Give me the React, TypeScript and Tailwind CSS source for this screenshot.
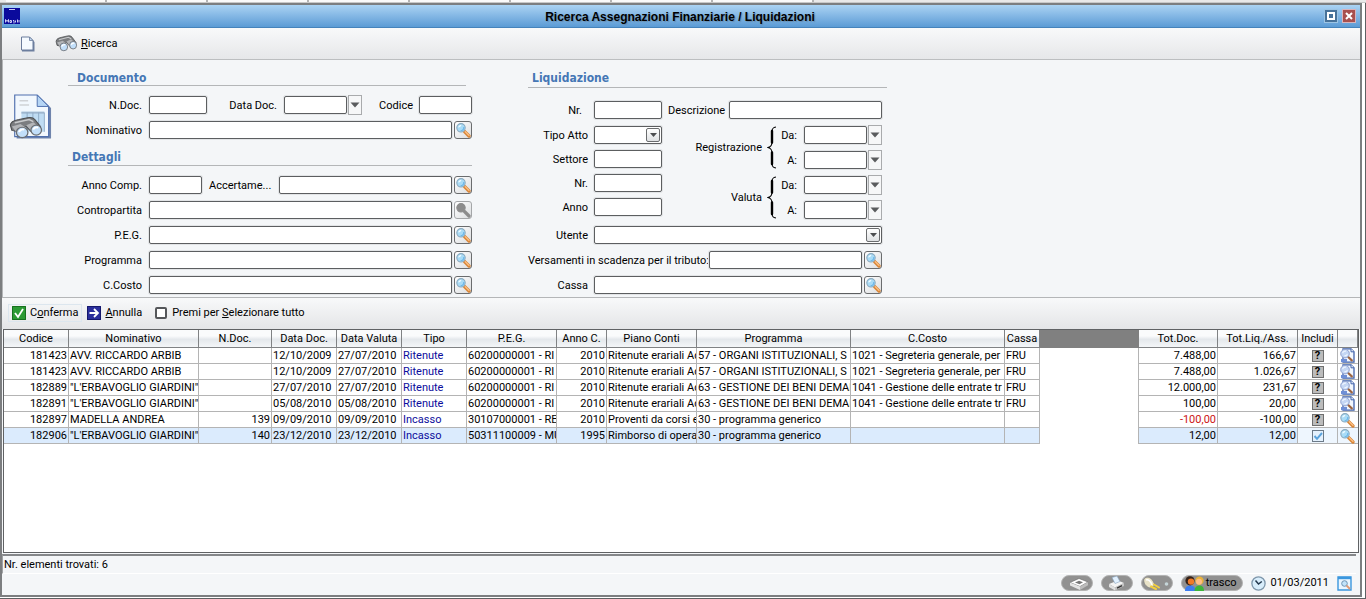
import React from "react";

const INPUT =
  "h-[18px] min-w-0 rounded-[2px] border border-[#5c5e60] bg-white px-1 shadow-[0_0_0_1px_#e2e4e6] outline-none";

function Lens({ muted = false }: { muted?: boolean }) {
  return (
    <svg width="16" height="16" viewBox="0 0 16 16" aria-hidden="true">
      <path d="M9.5 9.5 L14 14" stroke={muted ? "#8c8c8c" : "#d98638"} strokeWidth="3.2" strokeLinecap="round" />
      {!muted && <path d="M10.2 9.6 L14 13.4" stroke="#ffc58a" strokeWidth="1.3" strokeLinecap="round" />}
      <circle cx="6" cy="5.8" r="4.2" fill={muted ? "#8c8c8c" : "#a9dcf7"} stroke={muted ? "#8c8c8c" : "#8aaabf"} strokeWidth="1.1" />
      {!muted && <path d="M3.2 5.6 C3.4 3.6 5 2.7 6.6 2.8 C6 4.4 5 5.4 3.2 5.6 Z" fill="#effaff" />}
      {!muted && <path d="M8.8 5 C9 7 7.8 8.6 5.6 8.8" stroke="#6cb8ea" strokeWidth="1.2" fill="none" />}
    </svg>
  );
}

function SearchButton({ label, muted = false }: { label: string; muted?: boolean }) {
  return (
    <button
      type="button"
      aria-label={label}
      disabled={muted}
      className={`ml-0.5 flex h-[18px] w-[18px] shrink-0 items-center justify-center rounded-[3px] border bg-gradient-to-br from-white to-[#dcdee0] ${muted ? "border-[#a4a6a8]" : "border-[#6a6c6e]"}`}
    >
      <Lens muted={muted} />
    </button>
  );
}

function DateField({ id }: { id: string }) {
  return (
    <div className="flex h-[18px] items-center">
      <input id={id} className={`${INPUT} w-[63px]`} />
      <button
        type="button"
        aria-label="Apri calendario"
        className="ml-px flex h-5 w-3.5 shrink-0 items-center justify-center border border-[#a9abad] bg-[#f6f7f8]"
      >
        <svg width="10" height="6" viewBox="0 0 10 6" aria-hidden="true">
          <path d="M0.5 0.5 H9.5 L5 5.5 Z" fill="#5a5c5e" />
        </svg>
      </button>
    </div>
  );
}

function Combo({ id, width }: { id: string; width: string }) {
  return (
    <div className={`relative ${width}`}>
      <select id={id} className={`${INPUT} block w-full appearance-none`} />
      <span className="pointer-events-none absolute top-0.5 right-0.5 flex h-3.5 w-3.5 items-center justify-center rounded-[2px] border border-[#6a6c6e] bg-gradient-to-b from-white to-[#dfe1e3]">
        <svg width="7" height="4" viewBox="0 0 7 4" aria-hidden="true">
          <path d="M0 0 H7 L3.5 4 Z" fill="#4c4e50" />
        </svg>
      </span>
    </div>
  );
}

function Brace() {
  return (
    <svg width="10" height="43" viewBox="0 0 10 43" aria-hidden="true">
      <path
        d="M9 1 C5.4 1.4 5 3 5 6 V16 C5 19.4 4.2 20.6 1 21.5 C4.2 22.4 5 23.6 5 27 V37 C5 40 5.4 41.6 9 42"
        fill="none"
        stroke="#000"
        strokeWidth="1.2"
      />
      <path d="M5 5 V16.5 M5 26.5 V38" stroke="#000" strokeWidth="2.4" strokeLinecap="round" />
    </svg>
  );
}

function BinocularShapes() {
  return (
    <>
      <path d="M1 7 C1 4 4 3 7 2.4 L13 1 C15 .6 17 1 18 2.4 L22 8 L21.5 12 L16.5 13 L12 8 L9 9 L6.5 12 L2 11 Z" fill="#7b7d80" stroke="#4c4e50" strokeWidth=".8" />
      <path d="M4 5 L14 2.4 L17 4" stroke="#c9cbcd" strokeWidth="1.2" fill="none" />
      <path d="M2 8 L7 15 L12 9 L8 6 Z" fill="#b3b5b8" />
      <path d="M12 7 L17 13.5 L21 8.5 L17 4.6 Z" fill="#b3b5b8" />
      <ellipse cx="9.2" cy="12.6" rx="4" ry="4.1" fill="#c2dffa" stroke="#6b6e72" strokeWidth=".9" />
      <ellipse cx="19" cy="10.8" rx="3.7" ry="4" fill="#c2dffa" stroke="#6b6e72" strokeWidth=".9" />
      <path d="M7 12.4 C7.4 10.6 9 10 10.6 10.4 M17 10.4 C17.4 9 19 8.2 20.4 8.8" stroke="#fff" strokeWidth="1.4" fill="none" />
    </>
  );
}

function Binoculars() {
  return (
    <svg width="23" height="17" viewBox="0 0 24 18" aria-hidden="true">
      <BinocularShapes />
    </svg>
  );
}

function DocumentArt() {
  return (
    <svg width="43" height="47" viewBox="0 0 45 48" aria-hidden="true">
      <path d="M8 3 H31 L44 15 V47 H8 Z" fill="#6f84ac" />
      <path d="M6 1.5 H29.5 L41.5 13.5 V45 H6 Z" fill="#f2f8fe" stroke="#4f6fae" strokeWidth="1.2" />
      <path d="M29.5 1.5 V13.5 H41.5 Z" fill="#b5d5f5" stroke="#4f6fae" strokeWidth="1" />
      <path d="M11 7.5 H20 M11 12 H21" stroke="#cfd2d6" strokeWidth="1.6" />
      <path d="M13 19 H37 V40 H13 Z" fill="#bfdcf3" />
      <path d="M13 20 H37" stroke="#9fb6ce" strokeWidth="2" />
      <path d="M19 20 V40 M25 20 V40 M31 20 V40 M37 20 V40" stroke="#8fabc6" />
      <g transform="translate(0 24) scale(1.5 1.32)">
        <BinocularShapes />
      </g>
    </svg>
  );
}

function DocLens() {
  return (
    <svg width="16" height="15" viewBox="0 0 16 15" aria-hidden="true">
      <path d="M4 .8 H12 L15 3.8 V14.2 H4 Z" fill="#f2f7fe" stroke="#3f62ab" strokeWidth="1.3" />
      <path d="M12 .8 V3.8 H15" fill="#fff" stroke="#3f62ab" strokeWidth="1" />
      <path d="M2 11 H8 V14.2 H2 Z" fill="#6f8fd6" />
      <path d="M9.2 9 L12.8 12.4" stroke="#9c6440" strokeWidth="2.2" strokeLinecap="round" />
      <circle cx="6" cy="5.6" r="4.3" fill="#c4d6f4" stroke="#93a3cf" />
      <path d="M3.6 5.2 C4 3.6 5.4 2.8 7 3.2 M5.4 7.6 C6.6 8 8 7.4 8.4 6.2" stroke="#eef5ff" strokeWidth="1.3" fill="none" />
    </svg>
  );
}

function FormRow({ id, label, children }: { id: string; label: string; children: React.ReactNode }) {
  return (
    <div className="flex h-[18px] items-center">
      <label htmlFor={id} className="w-[81px] shrink-0 pr-[7px] text-right">
        {label}
      </label>
      {children}
    </div>
  );
}

function LookupRow({ id, label, muted }: { id: string; label: string; muted?: boolean }) {
  return (
    <FormRow id={id} label={label}>
      <input id={id} className={`${INPUT} flex-1`} />
      <SearchButton label={`Cerca ${label}`} muted={muted} />
    </FormRow>
  );
}

function NarrowRow({ id, label, inset = "pr-1.5", children }: { id: string; label: string; inset?: string; children?: React.ReactNode }) {
  return (
    <div className="flex h-[18px] items-center">
      <label htmlFor={id} className={`w-[66px] shrink-0 text-right ${inset}`}>
        {label}
      </label>
      {children ?? <input id={id} className={`${INPUT} w-[68px]`} />}
    </div>
  );
}

function DateRange({ id, label }: { id: string; label: string }) {
  return (
    <div role="group" aria-labelledby={`${id}-titolo`} className="flex h-[43px] items-center justify-end">
      <span id={`${id}-titolo`} className="pr-[5px]">{label}</span>
      <Brace />
      <div className="flex w-[105px] flex-col gap-[7px]">
        <div className="flex items-center justify-end gap-[7px]">
          <label htmlFor={`${id}-da`}>Da:</label>
          <DateField id={`${id}-da`} />
        </div>
        <div className="flex items-center justify-end gap-[7px]">
          <label htmlFor={`${id}-a`}>A:</label>
          <DateField id={`${id}-a`} />
        </div>
      </div>
    </div>
  );
}

const HEADING =
  "border-b border-[#b4b6b8] font-['DejaVu_Sans_Condensed','DejaVu_Sans',sans-serif] text-xs leading-4 font-bold text-[#4577b5]";

type Row = {
  codice: string;
  nome: string;
  ndoc: string;
  dataDoc: string;
  dataValuta: string;
  tipo: string;
  peg: string;
  anno: string;
  piano: string;
  programma: string;
  costo: string;
  cassa: string;
  totDoc: string;
  totLiq: string;
  checked?: boolean;
  simple?: boolean;
};

const r = (
  codice: string, nome: string, ndoc: string, dataDoc: string, dataValuta: string, tipo: string, peg: string, anno: string,
  piano: string, programma: string, costo: string, cassa: string, totDoc: string, totLiq: string, simple = false, checked = false,
): Row => ({ codice, nome, ndoc, dataDoc, dataValuta, tipo, peg, anno, piano, programma, costo, cassa, totDoc, totLiq, simple, checked });

const ROWS: Row[] = [
  r("181423", "AVV. RICCARDO ARBIB", "", "12/10/2009", "27/07/2010", "Ritenute", "60200000001 - RI", "2010", "Ritenute erariali Ac", "57 - ORGANI ISTITUZIONALI, S", "1021 - Segreteria generale, per", "FRU", "7.488,00", "166,67"),
  r("181423", "AVV. RICCARDO ARBIB", "", "12/10/2009", "27/07/2010", "Ritenute", "60200000001 - RI", "2010", "Ritenute erariali Ac", "57 - ORGANI ISTITUZIONALI, S", "1021 - Segreteria generale, per", "FRU", "7.488,00", "1.026,67"),
  r("182889", "\"L'ERBAVOGLIO GIARDINI\"", "", "27/07/2010", "27/07/2010", "Ritenute", "60200000001 - RI", "2010", "Ritenute erariali Ac", "63 - GESTIONE DEI BENI DEMAN", "1041 - Gestione delle entrate tr", "FRU", "12.000,00", "231,67"),
  r("182891", "\"L'ERBAVOGLIO GIARDINI\"", "", "05/08/2010", "05/08/2010", "Ritenute", "60200000001 - RI", "2010", "Ritenute erariali Ac", "63 - GESTIONE DEI BENI DEMAN", "1041 - Gestione delle entrate tr", "FRU", "100,00", "20,00"),
  r("182897", "MADELLA ANDREA", "139", "09/09/2010", "09/09/2010", "Incasso", "30107000001 - RE", "2010", "Proventi da corsi e", "30 - programma generico", "", "", "-100,00", "-100,00", true),
  r("182906", "\"L'ERBAVOGLIO GIARDINI\"", "140", "23/12/2010", "23/12/2010", "Incasso", "50311100009 - MU", "1995", "Rimborso di opera:", "30 - programma generico", "", "", "12,00", "12,00", true, true),
];

const HEADERS = ["Codice", "Nominativo", "N.Doc.", "Data Doc.", "Data Valuta", "Tipo", "P.E.G.", "Anno C.", "Piano Conti", "Programma", "C.Costo", "Cassa"];
const COLS = [
  "w-[65px]", "w-[130px]", "w-[73px]", "w-[65px]", "w-[65px]", "w-[65px]", "w-[90px]", "w-[50px]", "w-[90px]",
  "w-[154px]", "w-[154px]", "w-[35px]", "", "w-[79px]", "w-[80px]", "w-[40px]", "w-[20px]",
];
const TH =
  "h-[18px] overflow-hidden border-r border-b border-[#808284] bg-gradient-to-b from-[#fafbfc] from-35% via-[#e4e8ec] via-55% to-[#f4f6f8] p-0 text-center font-normal";
const TD = "h-4 overflow-hidden border-r border-b border-[#b4b4b4] py-0 pr-0 pl-px leading-[15px]";
const NUM = "h-4 overflow-hidden border-r border-b border-[#b4b4b4] pr-px text-right leading-[15px]";

function ResultsTable() {
  return (
    <table className="w-full table-fixed border-separate border-spacing-0 whitespace-nowrap">
      <colgroup>
        {COLS.map((c, i) => (
          <col key={i} className={c} />
        ))}
      </colgroup>
      <thead>
        <tr>
          {HEADERS.map((h) => (
            <th key={h} className={TH}>{h}</th>
          ))}
          <th aria-label="Spazio" className="bg-[#808080] p-0" />
          <th className={TH}>Tot.Doc.</th>
          <th className={TH}>Tot.Liq./Ass.</th>
          <th className={TH}>Includi</th>
          <th aria-label="Dettaglio" className={TH} />
        </tr>
      </thead>
      <tbody>
        {ROWS.map((x, i) => {
          const tint = x.checked ? "bg-[#dbebfd]" : "bg-white";
          return (
            <tr key={i}>
              <td className={`${NUM} ${tint}`}>{x.codice}</td>
              <td className={`${TD} ${tint}`}>{x.nome}</td>
              <td className={`${NUM} ${tint}`}>{x.ndoc}</td>
              <td className={`${TD} ${tint}`}>{x.dataDoc}</td>
              <td className={`${TD} ${tint}`}>{x.dataValuta}</td>
              <td className={`${TD} ${tint} text-[#0c0c9c]`}>{x.tipo}</td>
              <td className={`${TD} ${tint}`}>{x.peg}</td>
              <td className={`${NUM} ${tint}`}>{x.anno}</td>
              <td className={`${TD} ${tint}`}>{x.piano}</td>
              <td className={`${TD} ${tint}`}>{x.programma}</td>
              <td className={`${TD} ${tint}`}>{x.costo}</td>
              <td className={`${TD} ${tint}`}>{x.cassa}</td>
              <td className="border-r border-[#b4b4b4] bg-white p-0" />
              <td className={`${NUM} ${tint} ${x.totDoc.startsWith("-") ? "text-[#cc1414]" : ""}`}>{x.totDoc}</td>
              <td className={`${NUM} ${tint}`}>{x.totLiq}</td>
              <td className={`h-4 border-r border-b border-[#b4b4b4] p-0 ${x.checked ? "bg-[#eef6fe]" : "bg-white"}`}>
                <div className="flex h-[15px] items-center justify-center">
                  {x.checked ? (
                    <label className="relative h-3 w-3">
                      <input type="checkbox" defaultChecked aria-label={`Includi ${x.codice}`} className="block h-3 w-3 appearance-none border border-[#6c7a88] bg-[#e4f1fd]" />
                      <svg className="absolute inset-0" width="12" height="12" viewBox="0 0 12 12" aria-hidden="true">
                        <path d="M2.5 6 L5 8.8 L10 3" fill="none" stroke="#5ba3dc" strokeWidth="2" />
                      </svg>
                    </label>
                  ) : (
                    <button type="button" aria-label={`Includi ${x.codice}`} className="flex h-3 w-3 items-center justify-center border border-[#6f6f6f] bg-[#bcbcbc] text-[11px] leading-3 font-bold">
                      ?
                    </button>
                  )}
                </div>
              </td>
              <td className={`h-4 border-b border-[#b4b4b4] p-0 ${x.checked ? "bg-[#eef6fe]" : "bg-white"}`}>
                <button type="button" aria-label={`Dettaglio ${x.codice}`} className="flex h-[15px] w-full items-center pl-px">
                  {x.simple ? <Lens /> : <DocLens />}
                </button>
              </td>
            </tr>
          );
        })}
      </tbody>
    </table>
  );
}

const PILL = "flex h-4 w-8 items-center justify-center rounded-full border border-[#b4b4b4] bg-[#919191]";

function StatusTray() {
  return (
    <div className="flex h-[21px] items-center justify-end gap-2 pr-2 pb-[3px]">
      <button type="button" aria-label="Scanner" className={PILL}>
        <svg width="24" height="14" viewBox="0 0 24 14" aria-hidden="true">
          <path d="M5 6.500 L14 2.500 L23 6 L15 10.500 Z" fill="#fff" stroke="#666" strokeWidth=".6" />
          <path d="M5 6.500 V9.500 L15 14 V10.500 Z" fill="#e4e4e4" />
          <path d="M15 10.500 V14 L23 9.300 V6 Z" fill="#bdbdbd" />
          <path d="M10 6.500 L14 4.700 L18 6.300 L14.500 8.300 Z" fill="#777" />
        </svg>
      </button>
      <button type="button" aria-label="Stampante" className={PILL}>
        <svg width="18" height="15" viewBox="0 0 18 15" aria-hidden="true">
          <path d="M1 8 L10 4.5 L16 7 L7 11.5 Z" fill="#f4f4f4" />
          <path d="M4 1.5 L9 0 L12 5.5 L7 7.5 Z" fill="#e2f1ff" stroke="#8aa5c0" strokeWidth=".6" />
          <path d="M1 8 V11 L7 14.5 V11.5 Z" fill="#dfdfdf" />
          <path d="M7 11.5 V14.5 L16 10 V7 Z" fill="#c4c4c4" />
          <path d="M9 12.2 L14 9.6" stroke="#333" strokeWidth="1.4" />
        </svg>
      </button>
      <button type="button" aria-label="Connessione" className={PILL}>
        <svg width="28" height="15" viewBox="0 0 28 15" aria-hidden="true">
          <path d="M1 3 C3 0 8 1 10 5 L12 9 L7 12 C3 11 0 7 1 3 Z" fill="#e9e3c8" stroke="#777" strokeWidth=".6" />
          <path d="M3 4 C5 3 8 5 9 9" stroke="#fff" strokeWidth="1.4" fill="none" />
          <path d="M8 10.5 L13 13 M11 8.5 L16 11.5" stroke="#f3cf3e" strokeWidth="2" strokeLinecap="round" />
          <circle cx="23.5" cy="8" r="1.8" fill="#c5d5d8" />
        </svg>
      </button>
      <button type="button" className="flex h-4 items-center rounded-full border border-[#b4b4b4] bg-[#919191] pr-1.5">
        <svg width="24" height="16" viewBox="0 0 24 16" aria-hidden="true">
          <path d="M3 16 C3 11.5 6 10.5 8.5 10.5 C11 10.5 13.5 12 13.5 16 Z" fill="#3d7df0" />
          <circle cx="8" cy="5.8" r="4.6" fill="#33221a" />
          <circle cx="9" cy="6.6" r="3.2" fill="#f07a28" />
          <path d="M12.5 16 C12.5 12 15 10.5 17.5 10.5 C20 10.5 22 12 22 16 Z" fill="#3db53a" />
          <circle cx="17.5" cy="5.6" r="4.2" fill="#e8b33c" />
          <circle cx="17" cy="6.8" r="3" fill="#ffbe86" />
        </svg>
        trasco
      </button>
      <div className="flex items-center gap-1">
        <svg width="15" height="15" viewBox="0 0 15 15" aria-hidden="true">
          <circle cx="7.5" cy="7.5" r="6.6" fill="#d8edfb" stroke="#7d96ab" strokeWidth="1.3" />
          <path d="M4.5 4.5 L7.5 8 L10.8 5.5" fill="none" stroke="#23384d" strokeWidth="1.5" />
        </svg>
        <span>01/03/2011</span>
      </div>
      <button type="button" aria-label="Anteprima">
        <svg width="15" height="15" viewBox="0 0 15 15" aria-hidden="true">
          <path d="M1 1 H14 V14 H1 Z" fill="#eaf6ff" stroke="#3b97de" strokeWidth="1.4" />
          <path d="M1 2 H14" stroke="#3b97de" strokeWidth="2.4" />
          <circle cx="7.5" cy="7.5" r="2.8" fill="#c2e4fa" stroke="#6d94b4" />
          <path d="M9.5 9.5 L13 13" stroke="#e09a75" strokeWidth="1.8" />
        </svg>
      </button>
    </div>
  );
}

export default function App() {
  return (
    <div className="flex min-h-screen flex-col bg-white font-['Roboto','Liberation_Sans',sans-serif] text-[11px] leading-[14px] text-black">
      <div className="flex h-[3px] border-b border-[#c8c8c8] bg-[#e9e9e9] pl-1.5">
        {[1, 2, 3, 4, 5, 6, 7, 8].map((n) => (
          <span key={n} className="w-[101px] border-r-2 border-[#b4b4b4] bg-[#fafafa]" />
        ))}
      </div>
      <div className="mb-0.5 flex flex-1 flex-col border-r border-b border-[#5f6163] pr-[3px] pb-px">
        <div className="flex flex-1 flex-col border-2 border-[#7c7e80] bg-[#f4f6f8]">
          <header className="flex h-[23px] shrink-0 items-center border-b border-[#4583bb] bg-gradient-to-b from-[#abd3f3] to-[#5b9bd5] px-0.5">
            <svg width="16" height="16" viewBox="0 0 16 16" aria-hidden="true">
              <path d="M0 0 H16 V16 H0 Z" fill="#0a0a9c" />
              <path d="M5 1.5 H11" stroke="#c8c8f4" />
              <path d="M1.5 14.5 V11.5 L3 13.5 L4.5 11.5 V14.5 M6 12.5 H7.5 V14.5 H6 Z M9 12.5 H10 V15.5 M11.5 12.5 V14.5 M13.5 11.5 V14.5 M15 12 V14.5" stroke="#e4e4fc" strokeWidth=".9" fill="none" />
            </svg>
            <h1 className="flex-1 pt-0.5 pl-4 text-center font-['Liberation_Sans',Arial,sans-serif] text-xs font-bold [text-shadow:1px_1px_1px_#6a8fb0]">
              Ricerca Assegnazioni Finanziarie / Liquidazioni
            </h1>
            <div className="flex gap-1 pr-0.5">
              <button type="button" aria-label="Ingrandisci" className="flex h-3.5 w-3.5 items-center justify-center border border-[#9cc4e4] bg-[#47729a]">
                <svg width="8" height="8" viewBox="0 0 8 8" aria-hidden="true">
                  <path d="M1 1 H7 V7 H1 Z" fill="none" stroke="#fff" strokeWidth="2" />
                </svg>
              </button>
              <button type="button" aria-label="Chiudi" className="flex h-3.5 w-3.5 items-center justify-center border border-[#d8b4bc] bg-[#a8504e]">
                <svg width="8" height="8" viewBox="0 0 8 8" aria-hidden="true">
                  <path d="M1 1 L7 7 M7 1 L1 7" stroke="#fff" strokeWidth="2" />
                </svg>
              </button>
            </div>
          </header>

          <div className="flex h-8 shrink-0 items-center border-b border-[#bcbec0] bg-gradient-to-b from-[#f8f9fa] to-[#e6e7e9] pl-[18px]">
            <button type="button" aria-label="Nuovo">
              <svg width="15" height="16" viewBox="0 0 15 16" aria-hidden="true">
                <path d="M2 2 H10.5 L14.5 6 V15.5 H2 Z" fill="#6f80a0" />
                <path d="M1.5 1 H9.5 L13 4.5 V14 H1.5 Z" fill="#f5faff" stroke="#6b7c9c" />
                <path d="M9.5 1 V4.5 H13 Z" fill="#c6daf0" stroke="#6b7c9c" strokeWidth=".8" />
              </svg>
            </button>
            <button type="button" className="ml-5 flex items-center gap-[3px]">
              <Binoculars />
              <span><u>R</u>icerca</span>
            </button>
          </div>

          <form className="flex shrink-0 border-b border-l border-[#b4b6b8] pb-[3px] [&_label]:pt-0.5">
            <div className="w-[65px] shrink-0 pt-[33px] pl-1.5">
              <DocumentArt />
            </div>
            <section className="flex w-[404px] shrink-0 flex-col">
              <h2 className={`${HEADING} mr-1.5 h-[26px] pt-2.5 pl-[9px]`}>Documento</h2>
              <div className="flex flex-col gap-[7px] pt-2.5">
                <FormRow id="ndoc" label="N.Doc.">
                  <input id="ndoc" className={`${INPUT} w-[58px]`} />
                  <label htmlFor="datadoc" className="flex-1 pr-[7px] text-right">Data Doc.</label>
                  <DateField id="datadoc" />
                  <label htmlFor="codice" className="w-[57px] pr-1.5 text-right">Codice</label>
                  <input id="codice" className={`${INPUT} w-[53px]`} />
                </FormRow>
                <LookupRow id="nominativo" label="Nominativo" />
              </div>
              <h2 className={`${HEADING} h-[27px] pt-2.5 pl-1`}>Dettagli</h2>
              <div className="flex flex-col gap-[7px] pt-2.5">
                <FormRow id="annocomp" label="Anno Comp.">
                  <input id="annocomp" className={`${INPUT} w-[53px]`} />
                  <label htmlFor="accertamento" className="w-[77px] pl-[7px]">Accertame...</label>
                  <input id="accertamento" className={`${INPUT} flex-1`} />
                  <SearchButton label="Cerca accertamento" />
                </FormRow>
                <LookupRow id="contropartita" label="Contropartita" muted />
                <LookupRow id="peg" label="P.E.G." />
                <LookupRow id="programma" label="Programma" />
                <LookupRow id="ccosto" label="C.Costo" />
              </div>
            </section>

            <section className="ml-14 w-[359px] shrink-0">
              <h2 className={`${HEADING} h-7 pt-2.5 pl-1`}>Liquidazione</h2>
              <div className="flex flex-col gap-[7px] pt-[13px] pr-[5px]">
                <NarrowRow id="nr1" label="Nr." inset="pr-3">
                  <input id="nr1" className={`${INPUT} w-[68px]`} />
                  <label htmlFor="descrizione" className="w-[67px] pl-1.5">Descrizione</label>
                  <input id="descrizione" className={`${INPUT} flex-1`} />
                </NarrowRow>
                <div className="flex h-[93px] justify-between">
                  <div className="flex flex-col gap-1.5">
                    <NarrowRow id="tipoatto" label="Tipo Atto">
                      <Combo id="tipoatto" width="w-[68px]" />
                    </NarrowRow>
                    <NarrowRow id="settore" label="Settore" />
                    <NarrowRow id="nr2" label="Nr." />
                    <NarrowRow id="anno" label="Anno" />
                  </div>
                  <div className="flex flex-col gap-[7px]">
                    <DateRange id="registrazione" label="Registrazione" />
                    <DateRange id="valuta" label="Valuta" />
                  </div>
                </div>
                <NarrowRow id="utente" label="Utente">
                  <Combo id="utente" width="flex-1" />
                </NarrowRow>
                <div className="flex h-[18px] items-center">
                  <label htmlFor="tributo" className="w-[181px] shrink-0 whitespace-nowrap">Versamenti in scadenza per il tributo:</label>
                  <input id="tributo" className={`${INPUT} flex-1`} />
                  <SearchButton label="Cerca tributo" />
                </div>
                <NarrowRow id="cassa" label="Cassa">
                  <input id="cassa" className={`${INPUT} flex-1`} />
                  <SearchButton label="Cerca cassa" />
                </NarrowRow>
              </div>
            </section>
          </form>

          <div className="flex h-[31px] shrink-0 items-center bg-gradient-to-b from-[#f8f9fa] to-[#e4e5e7] pb-0.5 pl-1.5">
            <button type="button" className="flex h-[18px] items-center gap-1 border border-[#dce6ee] px-[3px]">
              <svg width="14" height="14" viewBox="0 0 14 14" aria-hidden="true">
                <path d="M0 0 H14 V14 H0 Z" fill="#2c9a34" />
                <path d="M.5 .5 H13.5 V13.5 H.5 Z" fill="none" stroke="#17701f" />
                <path d="M3 7 L6 11 L11 3" fill="none" stroke="#fff" strokeWidth="1.8" />
              </svg>
              <span>C<u>o</u>nferma</span>
            </button>
            <button type="button" className="ml-[5px] flex items-center gap-1">
              <svg width="14" height="14" viewBox="0 0 14 14" aria-hidden="true">
                <path d="M0 0 H14 V14 H0 Z" fill="#2b2f9c" />
                <path d="M.5 .5 H13.5 V13.5 H.5 Z" fill="none" stroke="#15186c" />
                <path d="M2.5 7 H11 M7 3 L11 7 L7 11" fill="none" stroke="#fff" strokeWidth="1.8" />
              </svg>
              <span><u>A</u>nnulla</span>
            </button>
            <label className="ml-[13px] flex items-center gap-[5px]">
              <input type="checkbox" className="h-3 w-3 appearance-none rounded-[2px] border-2 border-[#55575a] bg-white" />
              <span>Premi per <u>S</u>elezionare tutto</span>
            </label>
          </div>

          <main className="ml-px mr-px min-h-[224px] flex-1 border border-[#606264] bg-white">
            <ResultsTable />
          </main>

          <footer className="shrink-0">
            <div className="mt-px mr-1 h-5 border-t-2 border-b border-l border-t-[#85878a] border-b-white border-l-[#a0a2a4] pt-0.5 pl-px">
              Nr. elementi trovati: 6
            </div>
            <StatusTray />
          </footer>
        </div>
      </div>
    </div>
  );
}
